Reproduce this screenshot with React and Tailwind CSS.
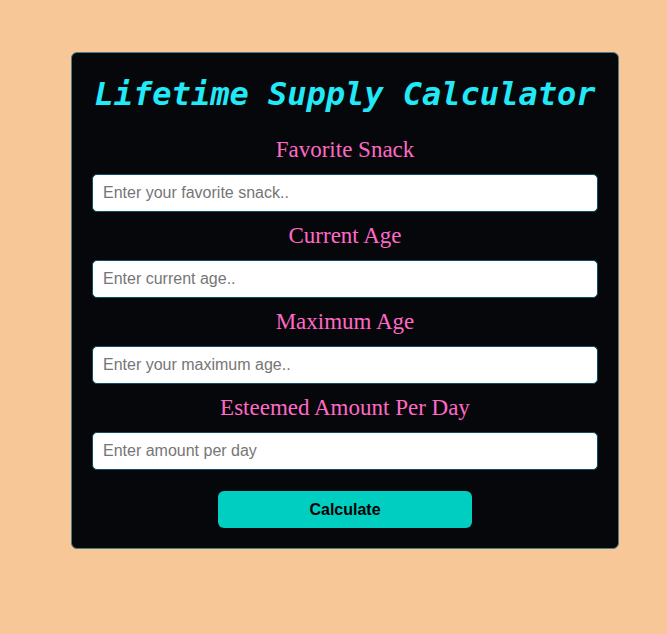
import React, { useState } from "react";

const fields = [
  { label: "Favorite Snack", placeholder: "Enter your favorite snack.." },
  { label: "Current Age", placeholder: "Enter current age.." },
  { label: "Maximum Age", placeholder: "Enter your maximum age.." },
  { label: "Esteemed Amount Per Day", placeholder: "Enter amount per day" },
];

const App = () => {
  const [values, setValues] = useState(fields.map(() => ""));

  return (
    <div className="min-h-[634px] w-full bg-[#f7c797] pt-[52px] pb-10">
      <div className="ml-[71px] w-[548px] rounded-md border border-[#4a7f88] bg-[#06070a] p-5 flex flex-col">
        {/* Title */}
        <h1 className="h-10 leading-10 mt-px text-center text-[32px] font-bold italic text-[#22e9f7] font-['DejaVu_Sans_Mono',monospace] mb-3">
          Lifetime Supply Calculator
        </h1>

        {fields.map((f, i) => (
          <div key={f.label} className="flex flex-col">
            <label className="mt-3 mb-3 h-6 leading-6 text-center text-[23px] text-[#ff69c6] font-['Liberation_Serif',serif]">
              {f.label}
            </label>
            <input
              type="text"
              value={values[i]}
              onChange={(e) => {
                const next = [...values];
                next[i] = e.target.value;
                setValues(next);
              }}
              placeholder={f.placeholder}
              className="h-[38px] w-full rounded-[5px] border border-[#0c4f66] bg-white px-[10px] text-base text-black placeholder:text-[#767676] font-['Liberation_Sans',sans-serif] outline-none"
            />
          </div>
        ))}

        <div className="flex justify-center mt-[21px]">
          <button className="h-[37px] w-[254px] rounded-md bg-[#00cec0] text-base font-bold text-black font-['Liberation_Sans',sans-serif]">
            Calculate
          </button>
        </div>
      </div>
    </div>
  );
};

export default App;
